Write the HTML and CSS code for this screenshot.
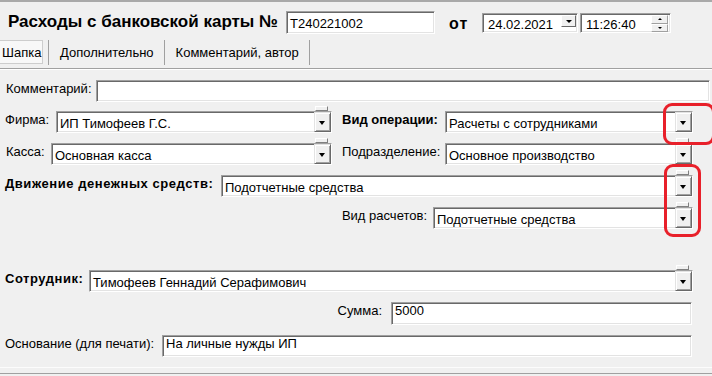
FILE: index.html
```html
<!DOCTYPE html>
<html lang="ru">
<head>
    <meta charset="UTF-8">
    <title>Расходы с банковской карты</title>
    <link rel="stylesheet" href="styles.css">
</head>
<body>
    <div class="window">
        <!-- шапка документа -->
        <div class="head">
            <h1 class="title">Расходы с банковской карты №</h1>
            <div class="edit num">T240221002</div>
            <span class="ot">от</span>
            <div class="edit date">24.02.2021<span class="drop"></span></div>
            <div class="edit time">11:26:40<span class="spin"><i></i><i></i></span></div>
        </div>

        <!-- закладки -->
        <div class="tabs">
            <div class="tab active">Шапка</div>
            <div class="sep"></div>
            <div class="tab">Дополнительно</div>
            <div class="sep"></div>
            <div class="tab">Комментарий, автор</div>
            <div class="sep"></div>
        </div>

        <div class="form">
            <div class="row row-comment">
                <span class="lbl lbl-comment">Комментарий:</span>
                <div class="edit grow"></div>
            </div>

            <div class="row">
                <span class="lbl lbl-firm">Фирма:</span>
                <div class="edit combo left-combo"><span class="val">ИП Тимофеев Г.С.</span><span class="btn"></span><span class="nub"></span></div>
                <span class="lbl bold lbl-right">Вид операции:</span>
                <div class="edit combo grow"><span class="val">Расчеты с сотрудниками</span><span class="btn"></span></div>
            </div>

            <div class="row">
                <span class="lbl lbl-kassa">Касса:</span>
                <div class="edit combo kassa-combo"><span class="val">Основная касса</span><span class="btn"></span><span class="nub"></span></div>
                <span class="lbl lbl-right">Подразделение:</span>
                <div class="edit combo grow"><span class="val">Основное производство</span><span class="btn"></span><span class="nub"></span></div>
            </div>

            <div class="row">
                <span class="lbl bold wide lbl-dds">Движение денежных средств:</span>
                <div class="edit combo grow"><span class="val">Подотчетные средства</span><span class="btn"></span><span class="nub"></span></div>
            </div>

            <div class="row">
                <span class="lbl lbl-vid">Вид расчетов:</span>
                <div class="edit combo grow"><span class="val">Подотчетные средства</span><span class="btn"></span><span class="nub"></span></div>
            </div>

            <div class="row row-employee">
                <span class="lbl bold wide lbl-emp">Сотрудник:</span>
                <div class="edit combo grow"><span class="val">Тимофеев Геннадий Серафимович</span><span class="btn"></span><span class="nub"></span></div>
            </div>

            <div class="row row-narrow">
                <span class="lbl lbl-sum">Сумма:</span>
                <div class="edit sum"><span class="val">5000</span></div>
            </div>

            <div class="row row-narrow">
                <span class="lbl lbl-base">Основание (для печати):</span>
                <div class="edit grow"><span class="val">На личные нужды ИП</span></div>
            </div>
        </div>

        <div class="bottom"></div>

        <!-- пометки красным -->
        <div class="mark mark-1"></div>
        <div class="mark mark-2"></div>
    </div>
</body>
</html>
```

FILE: styles.css
```css
/* общий вид окна */
body, html {
    margin: 0;
    background: #f0f0f0;
    font-family: "Liberation Sans", Arial, sans-serif;
    font-size: 13px;
    color: #000;
}

.window {
    position: relative;
    width: 712px;
    height: 376px;
    overflow: hidden;
    border-top: 2px solid #a9a9a9;
    box-sizing: border-box;
}

/* поля ввода с "вдавленной" рамкой */
.edit {
    position: relative;
    box-sizing: border-box;
    height: 22px;
    background: #fff;
    border: 1px solid;
    border-color: #a0a0a0 #fff #fff #a0a0a0;
    box-shadow: inset 1px 1px 0 #696969, inset -1px -1px 0 #e3e3e3;
    line-height: 15px;
    white-space: nowrap;
}

/* шапка */
.head {
    display: flex;
    align-items: flex-start;
    height: 34px;
    padding-left: 8px;
}

.title {
    margin: 9px 0 0 0;
    width: 278px;
    font-size: 17px;
    font-weight: bold;
    line-height: 21px;
    white-space: nowrap;
}

.num {
    margin-top: 9px;
    width: 149px;
    height: 23px;
    padding: 4px 0 0 3px;
}

.ot {
    margin: 12px 0 0 14px;
    width: 33px;
    font-size: 16px;
    font-weight: bold;
    line-height: 20px;
    letter-spacing: 1px;
}

.date, .time {
    margin-top: 11px;
    height: 20px;
    padding: 3px 0 0 5px;
}

.date {
    width: 96px;
}

.time {
    margin-left: 2px;
    width: 91px;
}

.drop {
    position: absolute;
    right: 1px;
    top: 1px;
    width: 15px;
    height: 12px;
    box-sizing: border-box;
    background: #f0f0f0;
    border: 1px solid;
    border-color: #fff #696969 #696969 #fff;
}

.drop::after {
    content: "";
    position: absolute;
    left: 4px;
    top: 4px;
    border-left: 3px solid transparent;
    border-right: 3px solid transparent;
    border-top: 3px solid #000;
}

.spin {
    position: absolute;
    right: 2px;
    top: 1px;
    width: 17px;
    height: 17px;
    display: flex;
    flex-direction: column;
}

.spin i {
    position: relative;
    flex: 1;
    background: #f0f0f0;
    border: 1px solid;
    border-color: #fff #a0a0a0 #a0a0a0 #fff;
}

.spin i::after {
    content: "";
    position: absolute;
    left: 6px;
    top: 2px;
    border-left: 2px solid transparent;
    border-right: 2px solid transparent;
    border-bottom: 2px solid #000;
}

.spin i + i::after {
    border-bottom: 0;
    border-top: 2px solid #000;
}

/* закладки */
.tabs {
    display: flex;
    align-items: center;
    height: 32px;
    border-bottom: 1px solid #a0a0a0;
    box-shadow: 0 1px 0 #fff;
}

.tab {
    padding: 0 10px 0 11px;
    line-height: 15px;
}

.tab.active {
    box-sizing: border-box;
    width: 43px;
    height: 24px;
    padding: 4px 0 0 2px;
    margin-right: 5px;
    background: #f8f8f8;
    border: 1px solid #cdcdcd;
    border-left: 0;
}

.sep {
    width: 1px;
    height: 25px;
    background: #a0a0a0;
}

/* форма */
.form {
    padding-top: 11px;
}

.row {
    display: flex;
    align-items: flex-start;
    padding: 0 19px 0 5px;
    margin-bottom: 10px;
}

.row-comment {
    padding-right: 2px;
    margin-bottom: 9px;
}

.row-employee {
    margin-top: 41px;
}

.row-narrow {
    padding-right: 20px;
}

.lbl {
    margin-top: 1px;
    line-height: 15px;
    white-space: nowrap;
}

.bold {
    font-weight: bold;
}

.wide {
    letter-spacing: 0.55px;
}

.lbl-comment { width: 91px; padding-left: 1px; box-sizing: border-box; }
.lbl-firm { width: 51px; }
.lbl-kassa { width: 46px; padding-left: 1px; box-sizing: border-box; }
.lbl-right { width: 103px; margin-left: 10px; }
.lbl-dds { width: 216px; }
.lbl-vid { width: 428px; text-align: right; padding-right: 6px; box-sizing: border-box; }
.lbl-emp { width: 84px; }
.lbl-sum { width: 386px; text-align: right; padding-right: 9px; box-sizing: border-box; }
.lbl-base { width: 157px; }

.grow {
    flex: 1;
}

.left-combo {
    width: 276px;
}

.kassa-combo {
    width: 281px;
}

.sum {
    flex: 1;
    height: 23px;
}

.combo {
    display: flex;
}

.val {
    flex: 1;
    padding: 4px 0 0 3px;
    overflow: hidden;
}

/* кнопка выпадающего списка */
.btn {
    position: relative;
    width: 17px;
    height: 20px;
    box-sizing: border-box;
    background: #f0f0f0;
    border: 1px solid;
    border-color: #e3e3e3 #696969 #696969 #e3e3e3;
    box-shadow: inset 1px 1px 0 #fff, inset -1px -1px 0 #a0a0a0;
}

.btn::after {
    content: "";
    position: absolute;
    left: 4px;
    top: 8px;
    border-left: 3.5px solid transparent;
    border-right: 3.5px solid transparent;
    border-top: 4px solid #000;
}

/* маленький язычок над кнопкой */
.nub {
    position: absolute;
    right: 3px;
    top: -6px;
    width: 13px;
    height: 5px;
    box-sizing: border-box;
    background: #f0f0f0;
    border: 1px solid;
    border-color: #fff #808080 #808080 #fff;
}

.bottom {
    height: 5px;
    border-top: 1px solid #fcfcfc;
    border-bottom: 1px solid #a0a0a0;
}

/* красные рамки */
.mark {
    position: absolute;
    border: 3px solid #e8202a;
    border-radius: 9px;
}

.mark-1 {
    left: 663px;
    top: 101px;
    width: 46px;
    height: 36px;
}

.mark-2 {
    left: 664px;
    top: 162px;
    width: 31px;
    height: 67px;
}
```
